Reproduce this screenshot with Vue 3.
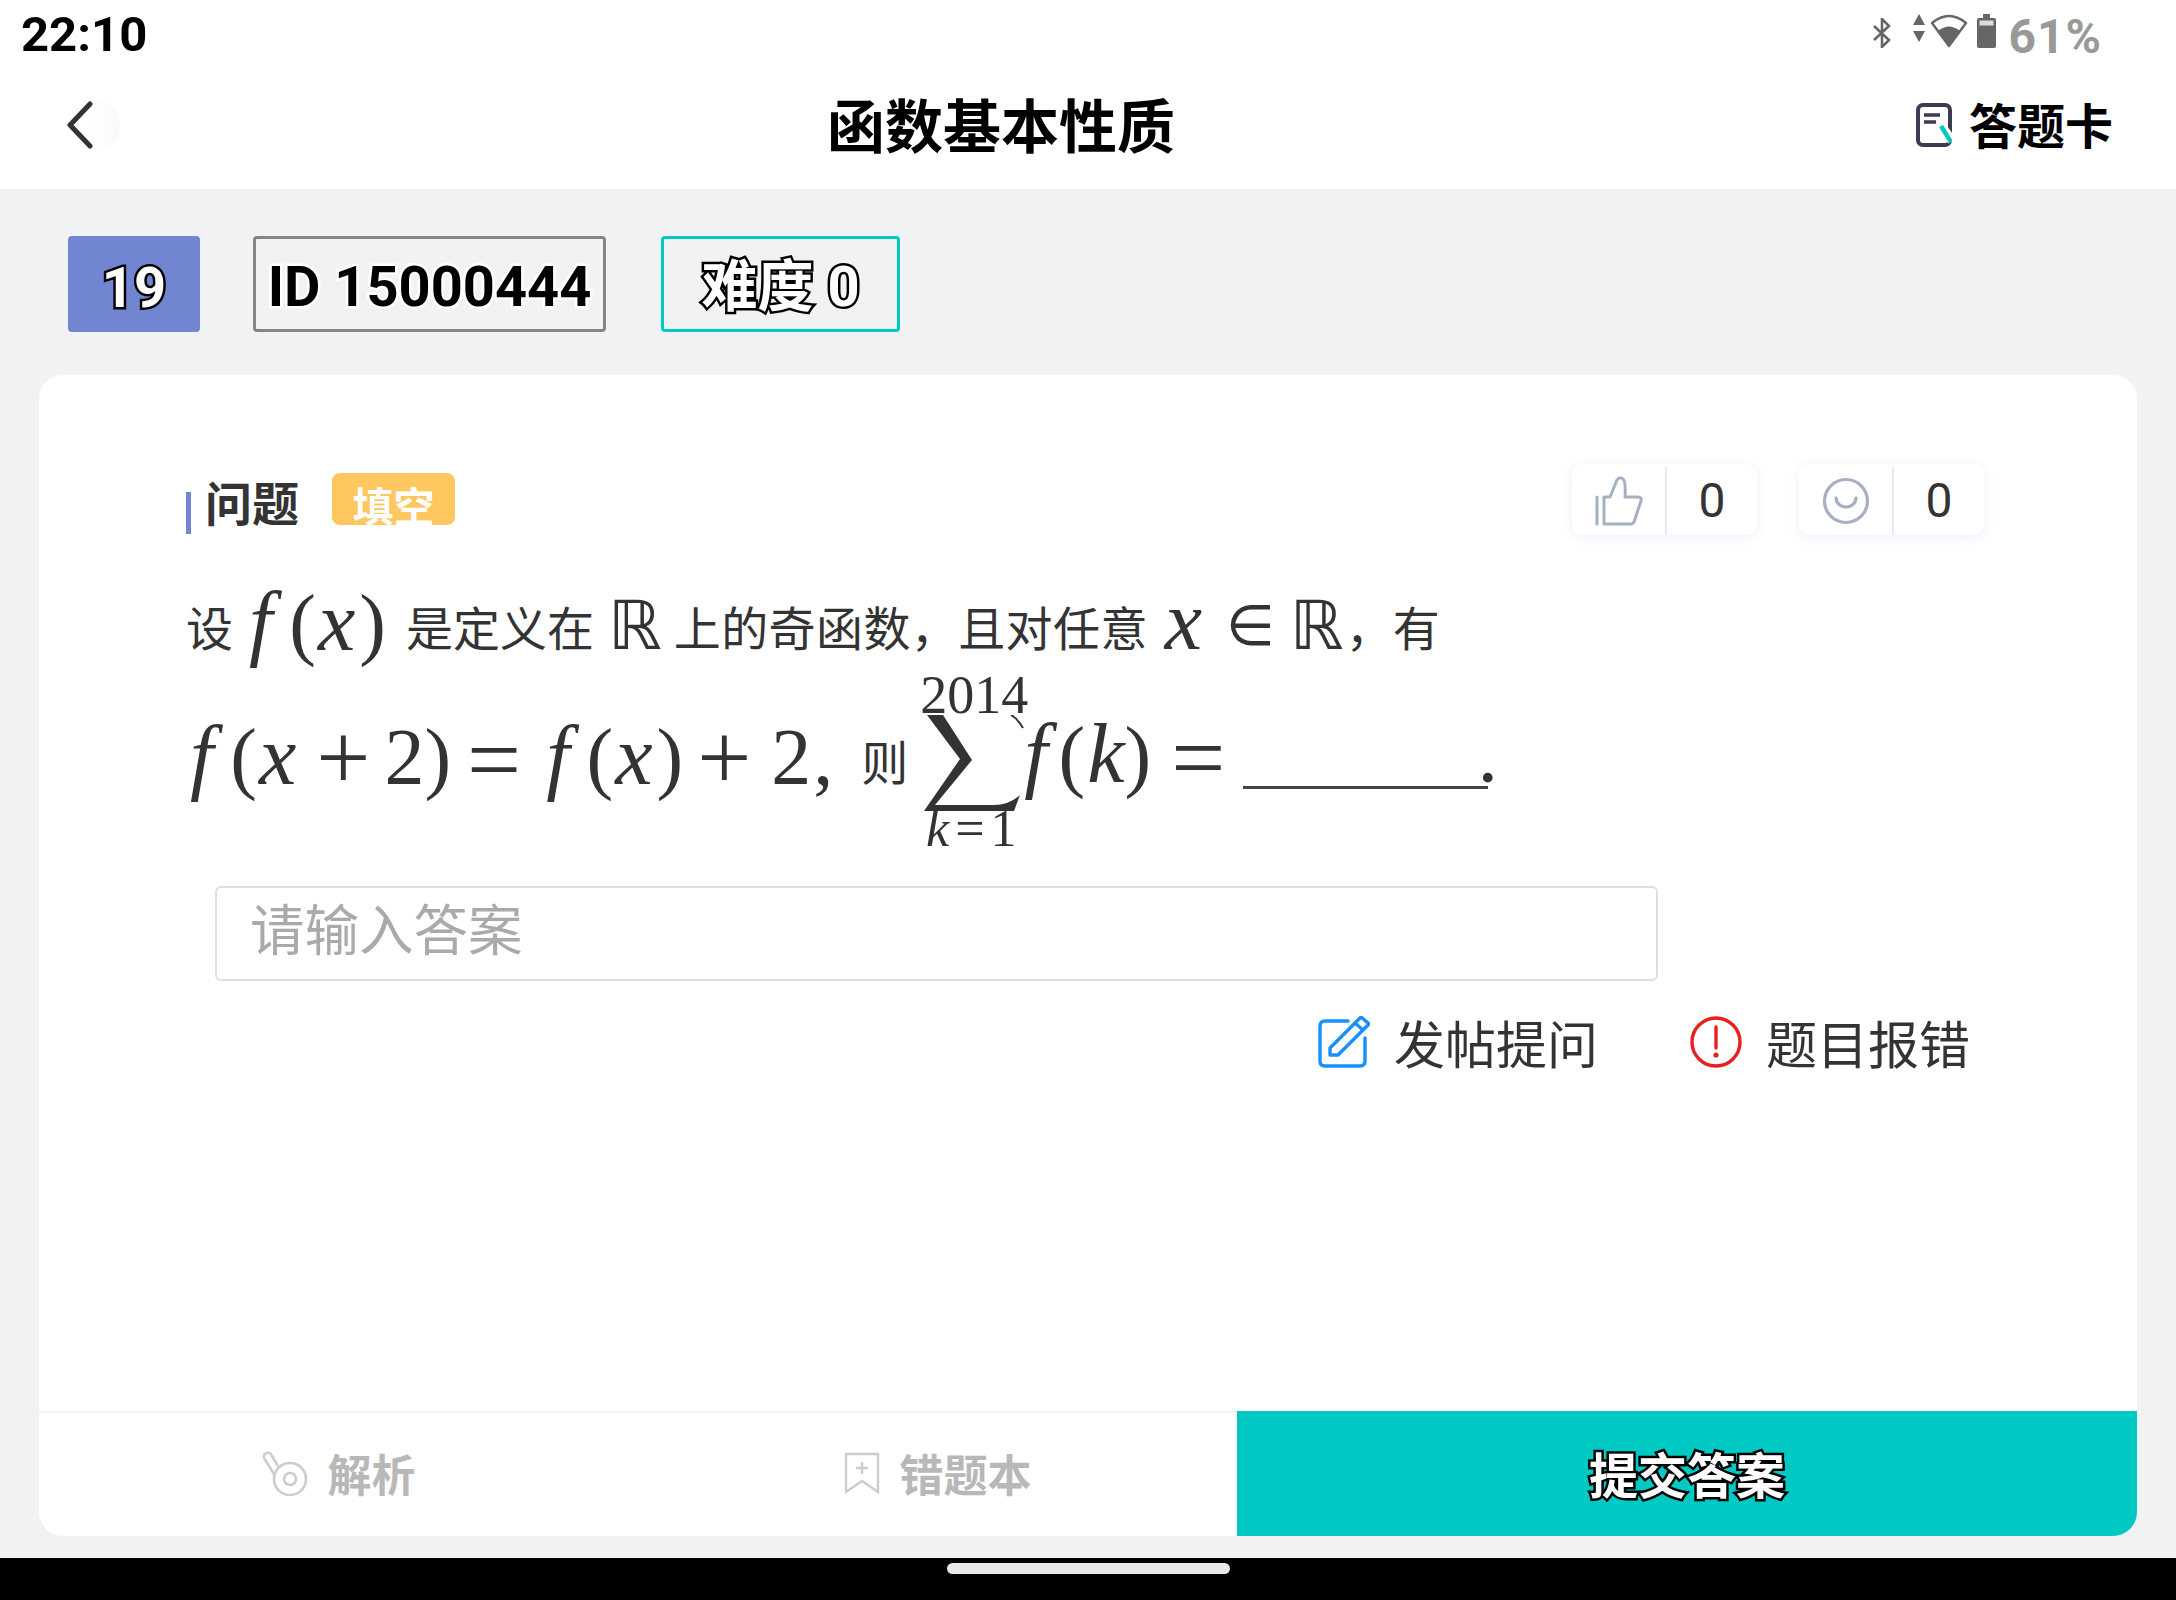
<script setup>
const tabs = [
  { key: 'analysis', label: '解析' },
  { key: 'book', label: '错题本' },
];
</script>

<template>
  <div class="page">
    <div class="status">
      <span class="time">22:10</span>
      <div class="status-right">
        <svg class="ic-bt" width="20" height="30" viewBox="0 0 20 30"><path d="M2 8L17 22L10 29V1L17 8L2 22" fill="none" stroke="#666" stroke-width="2.6"/></svg>
        <svg class="ic-arrows" width="12" height="28" viewBox="0 0 12 28"><path d="M6 0L12 11H0Z M0 17H12L6 28Z" fill="#666"/></svg>
        <svg class="ic-wifi" width="38" height="34" viewBox="0 0 38 34"><path d="M2 9Q19 -5 36 9L19 32Z" fill="none" stroke="#666" stroke-width="2.4" stroke-linejoin="round"/><path d="M8 17Q19 8 30 17L19 32Z" fill="#666"/></svg>
        <svg class="ic-batt" width="19" height="34" viewBox="0 0 19 34"><path d="M6 0H13V4H17Q19 4 19 6V32Q19 34 17 34H2Q0 34 0 32V6Q0 4 2 4H6Z" fill="#666"/><rect x="2.5" y="6.5" width="14" height="5" fill="#ddd"/></svg>
        <span class="pct">61%</span>
      </div>
    </div>

    <div class="nav">
      <div class="back">
        <svg width="30" height="48" viewBox="0 0 30 48"><path d="M24 3L4 24L24 45" fill="none" stroke="#333" stroke-width="5" stroke-linecap="round" stroke-linejoin="round"/></svg>
      </div>
      <div class="title">函数基本性质</div>
      <div class="card-link">
        <svg width="36" height="44" viewBox="0 0 36 44"><rect x="2" y="2" width="32" height="40" rx="5" fill="none" stroke="#3b3b52" stroke-width="4"/><path d="M8 12H24M8 19H20" stroke="#3b3b52" stroke-width="3.6"/><path d="M25 22L36 38" stroke="#fff" stroke-width="9"/><path d="M25 23L35 39" stroke="#00c8c2" stroke-width="4.4"/></svg>
        <span>答题卡</span>
      </div>
    </div>

    <div class="tags">
      <div class="tag tag-num">19</div>
      <div class="tag tag-id">ID 15000444</div>
      <div class="tag tag-diff">难度 0</div>
    </div>

    <div class="card">
      <div class="body">
        <div class="q-head">
          <div class="q-title">
            <i class="q-bar"></i>
            <span class="q-name">问题</span>
            <span class="q-type"><span>填空</span></span>
          </div>
          <div class="reactions">
            <div class="react">
              <div class="react-icon">
                <svg width="48" height="50" viewBox="0 0 48 50"><g fill="none" stroke="#a6afc3" stroke-width="3" stroke-linecap="round" stroke-linejoin="round"><path d="M2 21V48"/><path d="M9 21H15L22 4Q25 0 28 3Q31 6 30 21H43Q47 21 46 25L39 46Q38 48 35 48H9Z"/></g></svg>
              </div>
              <div class="react-num">0</div>
            </div>
            <div class="react">
              <div class="react-icon">
                <svg width="48" height="48" viewBox="0 0 48 48"><g fill="none" stroke="#a6afc3" stroke-width="3.2" stroke-linecap="round"><circle cx="24" cy="24" r="21.5"/><path d="M14 21C15 33 33 33 34 21"/></g></svg>
              </div>
              <div class="react-num">0</div>
            </div>
          </div>
        </div>

        <div class="line line-1">
          <span class="cn">设</span>
          <span class="m fx"><i class="f">f</i>(<i class="v">x</i>)</span>
          <span class="cn">是定义在</span>
          <span class="r">ℝ</span>
          <span class="cn wide">上的奇函数，且对任意</span>
          <span class="m mx"><i>x</i></span>
          <span class="op">∈</span>
          <span class="r r2">ℝ</span>
          <span class="cn">，有</span>
        </div>

        <div class="line line-2">
          <div class="run run-start">
            <span class="m"><i class="f">f</i>(<i class="v">x</i><span class="pl">+</span><span class="two">2</span>)<span class="eq">=</span><i class="f">f</i>(<i class="v">x</i>)<span class="pl pl2">+</span><span class="two">2</span><span class="cm">,</span></span><span class="cn ze">则</span>
          </div>
          <div class="sum">
            <span class="sum-top">2014</span>
            <svg width="100" height="98" viewBox="0 0 100 98"><path d="M3 0L19 0L48 45L11 90L70 90Q85 90 96 80L90 96L0 96L36 44Z" fill="#333"/><path d="M87 0Q94 4 99 13" fill="none" stroke="#333" stroke-width="2"/></svg>
            <span class="sum-bot"><i>k</i>=1</span>
          </div>
          <div class="run run-end">
            <span class="m"><i class="f fk">f</i>(<i class="v vk">k</i>)<span class="eq eq2">=</span></span><span class="blank"></span><span class="m dot">.</span>
          </div>
        </div>

        <input class="answer" type="text" placeholder="请输入答案" />

        <div class="actions">
          <div class="act">
            <svg width="52" height="52" viewBox="0 0 52 52"><g fill="none" stroke="#1890ff" stroke-width="3.4" stroke-linejoin="round" stroke-linecap="round"><path d="M30 5H7Q2 5 2 10V45Q2 50 7 50H42Q47 50 47 45V22"/><path d="M12 32L43 1L51 8L20 39H12Z"/><path d="M37 7L45 14"/></g></svg>
            <span>发帖提问</span>
          </div>
          <div class="act">
            <svg width="52" height="52" viewBox="0 0 52 52"><circle cx="26" cy="26" r="24" fill="none" stroke="#e8201f" stroke-width="3.4"/><path d="M26 11V32" stroke="#e8201f" stroke-width="3.4" stroke-linecap="round"/><circle cx="26" cy="39" r="2.6" fill="#e8201f"/></svg>
            <span>题目报错</span>
          </div>
        </div>
      </div>

      <div class="foot">
        <div class="foot-left">
          <div v-for="t in tabs" :key="t.key" class="foot-item">
            <svg v-if="t.key === 'analysis'" width="46" height="46" viewBox="0 0 46 46"><g fill="none" stroke="#ccc" stroke-width="2.6"><circle cx="28" cy="29" r="16"/><circle cx="28" cy="29" r="6"/><path d="M5 3Q1 4 2 8L12 24M5 3Q8 2 10 6L16 16"/></g></svg>
            <svg v-else width="36" height="42" viewBox="0 0 36 42"><g fill="none" stroke="#ccc" stroke-width="2.4"><path d="M2 2H34V40L18 29L2 40Z"/><path d="M18 10V22M12 16H24"/></g></svg>
            <span>{{ t.label }}</span>
          </div>
        </div>
        <div class="submit"><span>提交答案</span></div>
      </div>
    </div>

    <div class="gap"></div>
    <div class="home"><i></i></div>
  </div>
</template>

<style scoped>
.page {
  width: 2176px;
  height: 1600px;
  display: flex;
  flex-direction: column;
  background: #f1f2f4;
  font-family: "Noto Sans CJK SC", "Liberation Sans", sans-serif;
  color: #333;
  overflow: hidden;
}
.status {
  height: 60px;
  background: #fff;
  display: flex;
  justify-content: space-between;
  padding: 0 74px 0 21px;
}
.time {
  font: 700 49px/69px Roboto, sans-serif;
  color: #000;
}
.status-right {
  display: flex;
  align-items: flex-start;
  padding-top: 14px;
}
.ic-bt { margin-top: 4px; margin-right: 21px; }
.ic-arrows { margin-right: 5px; }
.ic-wifi { margin-right: 9px; }
.ic-batt { margin-right: 12px; }
.pct {
  font: 700 48px/46px Roboto, sans-serif;
  color: #999;
  letter-spacing: 1px;
}
.nav {
  height: 129px;
  background: #fff;
  display: flex;
  align-items: center;
  padding: 0 63px 0 66px;
  justify-content: space-between;
}
.back {
  width: 54px;
  height: 52px;
  border-radius: 0 26px 26px 0;
  background: linear-gradient(90deg, #fff 40%, #f9f9f9);
  display: flex;
  align-items: center;
}
.title {
  font-size: 58px;
  font-weight: 700;
  color: #000;
  line-height: 1;
  margin-right: 34px;
  margin-top: -4px;
}
.card-link {
  display: flex;
  align-items: center;
  gap: 17px;
  font-size: 48px;
  font-weight: 700;
  color: #000;
  line-height: 1;
  margin-top: -4px;
}
.card-link svg { margin-top: 4px; }
.tags {
  display: flex;
  padding: 47px 0 43px 68px;
  height: 186px;
  box-sizing: border-box;
}
.tag {
  height: 96px;
  box-sizing: border-box;
  border-radius: 4px;
  display: flex;
  align-items: center;
  justify-content: center;
  font-family: Roboto, "Noto Sans CJK SC", sans-serif;
  font-weight: 700;
  font-size: 56px;
  paint-order: stroke fill;
}
.tag-num {
  width: 132px;
  background: #7285d1;
  color: #fff;
  -webkit-text-stroke: 5px #000;
  margin-right: 53px;
  padding-top: 7px;
}
.tag-id {
  width: 353px;
  border: 3px solid #858585;
  color: #000;
  -webkit-text-stroke: 5px #fff;
  margin-right: 55px;
  padding-top: 6px;
}
.tag-diff {
  width: 239px;
  border: 3px solid #00c8c2;
  color: #fff;
  -webkit-text-stroke: 5px #000;
  padding-bottom: 5px;
}
.card {
  margin: 0 39px;
  height: 1161px;
  flex: none;
  background: #fff;
  border-radius: 24px;
  overflow: hidden;
  display: flex;
  flex-direction: column;
}
.body {
  flex: 1;
  padding: 89px 153px 0 147px;
}
.q-head {
  display: flex;
  justify-content: space-between;
  height: 71px;
}
.q-title {
  display: flex;
  align-items: flex-start;
  padding-top: 9px;
}
.q-bar {
  width: 5px;
  height: 42px;
  background: #7285d1;
  margin-top: 19px;
  margin-right: 14px;
}
.q-name {
  font-size: 47px;
  font-weight: 700;
  line-height: 56px;
  color: #333;
}
.q-type {
  width: 123px;
  height: 52px;
  margin-left: 33px;
  background: #fec75f;
  border-radius: 8px;
  overflow: hidden;
  color: #fff;
  font-size: 41px;
  font-weight: 700;
  text-align: center;
  line-height: 63px;
}
.reactions {
  display: flex;
  gap: 42px;
}
.react {
  width: 185px;
  height: 71px;
  border-radius: 10px;
  background: #fff;
  box-shadow: 0 2px 12px rgba(120, 140, 220, 0.14);
  display: flex;
}
.react-icon {
  width: 93px;
  margin-top: 3px;
  border-right: 2px solid #e8ebf2;
  display: flex;
  align-items: center;
  justify-content: center;
}
.react-num {
  flex: 1;
  text-align: center;
  font: 400 48px/73px Roboto, sans-serif;
  color: #333;
}
.line {
  display: flex;
  color: #333;
  white-space: nowrap;
}
.line-1 {
  align-items: center;
  margin-top: 53px;
  height: 74px;
}
.line-2 {
  align-items: center;
  margin-top: 13px;
  height: 170px;
}
.cn {
  font-size: 47px;
  font-family: "Noto Sans CJK SC", sans-serif;
  font-weight: 400;
}
.wide { letter-spacing: 0.4px; }
.m {
  font-family: "Liberation Serif", serif;
  font-size: 80px;
}
.m i {
  font-size: 84px;
}
.m .f { letter-spacing: 17px; }
.m .v { letter-spacing: 4px; margin-left: 2px; }
.m .fk { letter-spacing: 11px; margin-left: 6px; }
.m .vk { letter-spacing: 0; }
.fx { margin: 0 20px 8px 16px; }
.mx { margin: 0 24px 10px 17px; }
.r {
  font-family: "DejaVu Sans", sans-serif;
  font-size: 68px;
  margin: 0 12px 0 14px;
}
.r2 { margin-left: 9px; margin-right: 2px; }
.op {
  font-family: "DejaVu Sans", sans-serif;
  font-size: 56px;
  margin-right: 6px;
}
.pl { font-size: 96px; margin: 0 14px 0 16px; vertical-align: -5px; }
.pl2 { margin-left: 14px; margin-right: 20px; }
.eq { font-size: 96px; margin: 0 25px 0 16px; vertical-align: -8px; }
.eq2 { margin-left: 20px; margin-right: 0; }
.cm { margin-left: 2px; }
.ze { margin-left: 28px; vertical-align: 4px; }
.run {
  display: block;
  margin-bottom: 5px;
}
.run-start { margin-left: 4px; }
.sum {
  display: flex;
  flex-direction: column;
  align-items: center;
  width: 104px;
  margin: 0 -8px 0 14px;
  flex: none;
}
.sum-top {
  font: 54px/40px "Liberation Serif", serif;
  height: 40px;
}
.sum-bot {
  font: 52px/32px "Liberation Serif", serif;
  height: 32px;
  letter-spacing: 6px;
}
.sum svg { display: block; }
.run-end .m { line-height: 1; }
.blank {
  display: inline-block;
  width: 245px;
  height: 3px;
  background: #444;
  margin-left: 18px;
  margin-right: -8px;
  vertical-align: -7px;
}
.dot { font-size: 60px; font-weight: 700; }
.answer {
  display: block;
  box-sizing: border-box;
  width: 1443px;
  height: 95px;
  margin: 41px 0 0 29px;
  border: 2px solid #dcdfe6;
  border-radius: 6px;
  padding: 0 33px 14px;
  font-family: "Noto Sans CJK SC", sans-serif;
  font-size: 54.5px;
  outline: none;
  background: #fff;
}
.answer::placeholder {
  color: #aaa;
}
.actions {
  display: flex;
  justify-content: flex-end;
  gap: 92px;
  margin-top: 34px;
  padding-right: 14px;
}
.act {
  display: flex;
  align-items: center;
  gap: 24px;
  font-size: 51px;
  line-height: 54px;
  color: #333;
}
.foot {
  height: 125px;
  flex: none;
  display: flex;
}
.foot-left {
  width: 1198px;
  display: flex;
  border-top: 2px solid #f0f4fb;
  box-sizing: border-box;
}
.foot-item {
  flex: 1;
  display: flex;
  align-items: center;
  justify-content: center;
  gap: 20px;
  font-size: 44px;
  font-weight: 700;
  color: #b8b8b8;
  padding-bottom: 4px;
}
.submit {
  flex: 1;
  background: #00c8c2;
  display: flex;
  align-items: center;
  justify-content: center;
  color: #fff;
  font-size: 49px;
  font-weight: 700;
  -webkit-text-stroke: 5px #000;
  paint-order: stroke fill;
  padding-bottom: 2px;
}
.gap {
  height: 22px;
  flex: none;
}
.home {
  flex: 1;
  background: #000;
  display: flex;
  justify-content: center;
  padding-top: 5px;
}
.home i {
  width: 283px;
  height: 11px;
  border-radius: 6px;
  background: #e8e8e8;
}
</style>
